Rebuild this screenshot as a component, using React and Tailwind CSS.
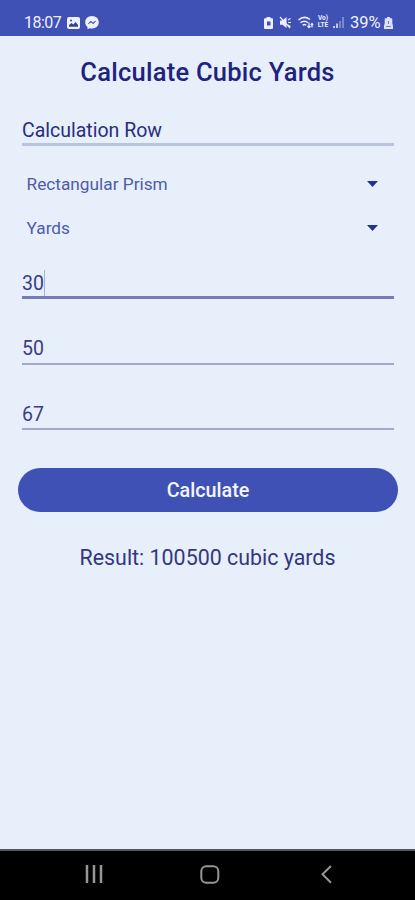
import React from "react";

function StatusBar() {
  return (
    <header className="flex h-[35.5px] shrink-0 items-start bg-[#3f51b5] pt-[13px] pl-[24px] text-[#eef0fc]">
      <span className="w-[43px] whitespace-nowrap text-[16px] leading-[20px] tracking-[-0.5px]">18:07</span>
      <svg className="mt-[4px] h-[12px] w-[13px]" viewBox="0 0 13 12">
        <rect width="13" height="12" rx="2" fill="currentColor" />
        <path d="M2 9.7V8l2.4-2 2 1.6L8.6 5 11 8v1.7z" fill="#33439d" />
        <circle cx="4" cy="3.5" r="1" fill="#33439d" />
      </svg>
      <svg className="mt-[3px] ml-[5px] h-[14px] w-[14px]" viewBox="0 0 14 14">
        <path d="M7 0C3 0 .2 2.8.2 6.3c0 2 .9 3.700 2.300 4.800v2.200l2.200-1.100c.7.2 1.500.3 2.300.3 4 0 6.800-2.700 6.800-6.200S11 0 7 0z" fill="currentColor" />
        <path d="M3.200 7.800 5.800 5l2 1.700L10.800 5 8.200 7.900l-2-1.700z" fill="#3f51b5" stroke="#3f51b5" strokeWidth=".5" />
      </svg>
      <svg className="mt-[4px] ml-[165px] h-[12px] w-[9px]" viewBox="0 0 9 12">
        <path d="M2.500 0h4v1.200H8Q9 1.200 9 2.200v8.600Q9 12 8 12H1q-1 0-1-1.200V2.200q0-1 1-1h1.500z" fill="currentColor" />
        <path d="M3 4.500h3.500v4H3z" fill="#3f51b5" />
      </svg>
      <svg className="mt-[3px] ml-[6px] h-[13px] w-[13px]" viewBox="0 0 13 13">
        <path d="M1 4.500h2.500L7.500 1v11L3.500 8.800H1z" fill="currentColor" />
        <path d="m1 1 10 11M9 4l2.500-1.500M9 6.500h3M9 9l2.500 1.500" fill="none" stroke="currentColor" strokeWidth="1.200" />
      </svg>
      <svg className="mt-[3px] ml-[6px] h-[13px] w-[16px]" viewBox="0 0 16 13">
        <path d="M.5 4Q6 -1 12 3.500M2.500 6.700q3.800-3 7.500 0M4.700 9.300q1.800-1.500 3.500 0" fill="none" stroke="currentColor" strokeWidth="1.500" />
        <path d="M11 6.500v5M9.500 10l1.500 1.700 1.500-1.700M14 11.500v-4M12.800 9 14 7.500 15.200 9" fill="none" stroke="currentColor" strokeWidth="1.200" />
      </svg>
      <span className="mt-[2px] ml-[2px] flex h-[14px] w-[14px] flex-col text-center text-[6.500px] leading-[7px] font-bold">
        <span className="block h-[7px]">Vo)</span>
        <span className="block h-[7px]">LTE</span>
      </span>
      <svg className="mt-[4px] ml-[3px] h-[11px] w-[11px]" viewBox="0 0 11 11">
        <path d="M1 11V9M4 11V6.500" stroke="currentColor" strokeWidth="1.500" />
        <path d="M7 11V4M10 11V0" stroke="#9aa5dd" strokeWidth="1.300" />
      </svg>
      <span className="ml-[6px] w-[34px] whitespace-nowrap text-[16.500px] leading-[20px]">39%</span>
      <svg className="mt-[4px] h-[12px] w-[9px]" viewBox="0 0 9 12">
        <path d="M3 0h3v1.200h1.500q.8 0 .8 1V6L9 9v3H0V9l.7-3V2.200q0-1 .8-1H3z" fill="#dce1f8" />
        <path d="M2.200 9.500h4.600M4.500 4v3" stroke="#6574c5" strokeWidth="1" />
      </svg>
    </header>
  );
}

function Dropdown({ label }) {
  return (
    <div className="flex h-[44px] items-center justify-between pr-[16px] pl-[4.500px] text-[17.250px] leading-[20px] text-[#505baa]">
      <span>{label}</span>
      <svg className="h-[6px] w-[11px]" viewBox="0 0 11 6">
        <path d="M0 0h11L5.500 6z" fill="#20309f" />
      </svg>
    </div>
  );
}

function NumberField({ value, focused }) {
  return (
    <div className={focused ? "flex h-[49px] items-center border-b-[3px] border-[#757cb8] pt-[20px]" : "flex h-[65.500px] items-center border-b-2 border-[#a1a9d1] pt-[36px]"}>
      <span className="pt-px text-[19.500px] leading-[24px] text-[#3b3c88]">{value}</span>
      {focused && <span className="h-[26px] w-px bg-[#aab1d0]" />}
    </div>
  );
}

export default function App() {
  return (
    <div className="flex h-[900px] w-[415px] flex-col overflow-hidden bg-[#e7effb] font-[Roboto,sans-serif]">
      <StatusBar />
      <main className="flex flex-1 flex-col">
        <h1 className="mt-[20px] text-center text-[25.500px] leading-[32px] font-medium tracking-[0.250px] text-[#1e237e]">Calculate Cubic Yards</h1>
        <section className="mt-[26.500px] mr-[21px] ml-[22px]">
          <div className="h-[32px] border-b-[3px] border-[#b8c4de] pt-[5px] text-[19.500px] leading-[24px] text-[#292d7d]">Calculation Row</div>
          <div className="mt-[16px]">
            <Dropdown label="Rectangular Prism" />
            <Dropdown label="Yards" />
          </div>
          <NumberField value="30" focused />
          <NumberField value="50" />
          <NumberField value="67" />
        </section>
        <button className="mt-[38px] mr-[17px] ml-[18px] h-[44px] rounded-full bg-[#3f51b5] pt-[2px] text-[19.750px] leading-[24px] font-medium text-[#f3f5ff]">Calculate</button>
        <p className="mt-[32px] text-center text-[21.400px] leading-[28px] text-[#34377f]">Result: 100500 cubic yards</p>
      </main>
      <nav className="flex h-[51px] shrink-0 items-start border-t-2 border-[#55585e] bg-black pt-[14px] pl-[85px] text-[#969696]">
        <svg className="h-[18px] w-[18px]" viewBox="0 0 18 18">
          <path d="M2 0v18M9 0v18M16 0v18" stroke="currentColor" strokeWidth="2.500" />
        </svg>
        <svg className="ml-[97px] h-[19px] w-[20px]" viewBox="0 0 20 19">
          <rect x="1.300" y="1.300" width="17" height="16.400" rx="5" fill="none" stroke="currentColor" strokeWidth="2" />
        </svg>
        <svg className="ml-[101px] h-[19px] w-[11px]" viewBox="0 0 11 19">
          <path d="M10 1 1.500 9.300 10 17.700" fill="none" stroke="currentColor" strokeWidth="2" />
        </svg>
      </nav>
    </div>
  );
}
